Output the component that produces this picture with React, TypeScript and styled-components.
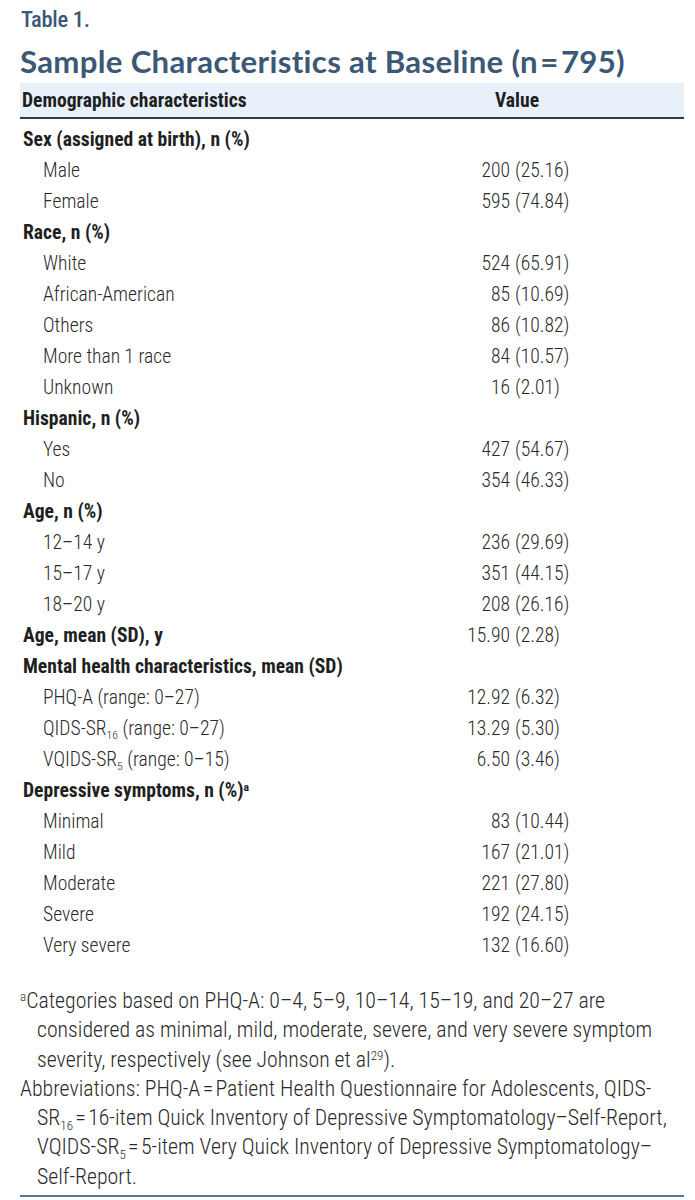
import React from "react";
import styled, { createGlobalStyle } from "styled-components";

const GlobalStyle = createGlobalStyle`
  html, body { margin: 0; padding: 0; background: #ffffff; }
  body { font-family: "Roboto Condensed", Roboto, "Liberation Sans", sans-serif; color: #231f20; }
`;

const Page = styled.div`
  width: 695px;
  box-sizing: border-box;
  padding: 0 11px 0 20px;
`;

const Label = styled.div`
  font-family: "Roboto Condensed", Roboto, sans-serif;
  font-weight: 500;
  font-size: 22.5px;
  line-height: 28px;
  padding-top: 5px;
  padding-left: 1px;
  color: #3b5877;
  letter-spacing: -0.3px;
`;

const Title = styled.h1`
  margin: 0;
  font-family: Lato, "Open Sans", sans-serif;
  font-weight: 700;
  font-size: 31.2px;
  line-height: 40px;
  padding-top: 8px;
  padding-bottom: 2px;
  color: #3b5877;
  letter-spacing: 0.3px;
`;

const Table = styled.div`
  margin-top: 0;
`;

const Grid = styled.div`
  display: grid;
  grid-template-columns: 1fr 264px;
  align-items: center;
`;

const HeadRow = styled(Grid)`
  height: 34px;
  background: #e8f1fa;
  border-bottom: 2px solid #3a3a3a;
  font-weight: 700;
  font-size: 19.6px;
  color: #1f1f1f;
`;

const HeadLabel = styled.div`
  padding-left: 2px;
`;

const HeadValue = styled.div`
  text-align: center;
  padding-right: 70px;
`;

const Body = styled.div`
  padding-top: 5px;
`;

const Row = styled(Grid)`
  height: 31px;
  font-size: 19.6px;
  line-height: 31px;
`;

const RowLabel = styled.div<{ $group?: boolean }>`
  padding-left: ${(p) => (p.$group ? "3px" : "23px")};
  font-weight: ${(p) => (p.$group ? 700 : 300)};
  color: ${(p) => (p.$group ? "#1f1f1f" : "#2a2a2a")};
  white-space: nowrap;
`;

const ValueCell = styled.div`
  display: flex;
  font-weight: 300;
  color: #2a2a2a;
  white-space: nowrap;
`;

const Num = styled.span`
  width: 90px;
  text-align: right;
`;

const Paren = styled.span`
  margin-left: 5px;
`;

const Sub = styled.sub`
  font-size: 0.6em;
  vertical-align: -0.35em;
  line-height: 0;
`;

const Sup = styled.sup`
  font-size: 0.6em;
  vertical-align: 0.55em;
  line-height: 0;
`;

const Notes = styled.div`
  margin-top: 25px;
  font-size: 21.8px;
  line-height: 29.3px;
  font-weight: 300;
  color: #2a2a2a;
`;

const Note = styled.p`
  margin: 0;
  padding-left: 17px;
  text-indent: -17px;
  white-space: nowrap;
`;

const Rule = styled.div`
  margin-top: 4px;
  height: 2px;
  background: #5b7591;
`;

type Item = {
  label: React.ReactNode;
  group?: boolean;
  num?: string;
  paren?: string;
};

const rows: Item[] = [
  { label: "Sex (assigned at birth), n (%)", group: true },
  { label: "Male", num: "200", paren: "(25.16)" },
  { label: "Female", num: "595", paren: "(74.84)" },
  { label: "Race, n (%)", group: true },
  { label: "White", num: "524", paren: "(65.91)" },
  { label: "African-American", num: "85", paren: "(10.69)" },
  { label: "Others", num: "86", paren: "(10.82)" },
  { label: "More than 1 race", num: "84", paren: "(10.57)" },
  { label: "Unknown", num: "16", paren: "(2.01)" },
  { label: "Hispanic, n (%)", group: true },
  { label: "Yes", num: "427", paren: "(54.67)" },
  { label: "No", num: "354", paren: "(46.33)" },
  { label: "Age, n (%)", group: true },
  { label: "12–14 y", num: "236", paren: "(29.69)" },
  { label: "15–17 y", num: "351", paren: "(44.15)" },
  { label: "18–20 y", num: "208", paren: "(26.16)" },
  { label: "Age, mean (SD), y", group: true, num: "15.90", paren: "(2.28)" },
  { label: "Mental health characteristics, mean (SD)", group: true },
  { label: "PHQ-A (range: 0–27)", num: "12.92", paren: "(6.32)" },
  {
    label: (
      <>
        QIDS-SR<Sub>16</Sub> (range: 0–27)
      </>
    ),
    num: "13.29",
    paren: "(5.30)",
  },
  {
    label: (
      <>
        VQIDS-SR<Sub>5</Sub> (range: 0–15)
      </>
    ),
    num: "6.50",
    paren: "(3.46)",
  },
  {
    label: (
      <>
        Depressive symptoms, n (%)<Sup>a</Sup>
      </>
    ),
    group: true,
  },
  { label: "Minimal", num: "83", paren: "(10.44)" },
  { label: "Mild", num: "167", paren: "(21.01)" },
  { label: "Moderate", num: "221", paren: "(27.80)" },
  { label: "Severe", num: "192", paren: "(24.15)" },
  { label: "Very severe", num: "132", paren: "(16.60)" },
];

const eq = "\u200a=\u200a";

export default function App() {
  return (
    <>
      <GlobalStyle />
      <Page>
        <Label>Table 1.</Label>
        <Title>Sample Characteristics at Baseline (n{eq}795)</Title>
        <Table>
          <HeadRow>
            <HeadLabel>Demographic characteristics</HeadLabel>
            <HeadValue>Value</HeadValue>
          </HeadRow>
          <Body>
            {rows.map((r, i) => (
              <Row key={i}>
                <RowLabel $group={r.group}>{r.label}</RowLabel>
                <ValueCell>
                  {r.num && (
                    <>
                      <Num>{r.num}</Num>
                      <Paren>{r.paren}</Paren>
                    </>
                  )}
                </ValueCell>
              </Row>
            ))}
          </Body>
        </Table>
        <Notes>
          <Note>
            <Sup>a</Sup>Categories based on PHQ-A: 0–4, 5–9, 10–14, 15–19, and 20–27 are
            <br />
            considered as minimal, mild, moderate, severe, and very severe symptom
            <br />
            severity, respectively (see Johnson et al<Sup>29</Sup>).
          </Note>
          <Note>
            Abbreviations: PHQ-A{eq}Patient Health Questionnaire for Adolescents, QIDS-
            <br />
            SR<Sub>16</Sub>
            {eq}16-item Quick Inventory of Depressive Symptomatology–Self-Report,
            <br />
            VQIDS-SR<Sub>5</Sub>
            {eq}5-item Very Quick Inventory of Depressive Symptomatology–
            <br />
            Self-Report.
          </Note>
        </Notes>
        <Rule />
      </Page>
    </>
  );
}
